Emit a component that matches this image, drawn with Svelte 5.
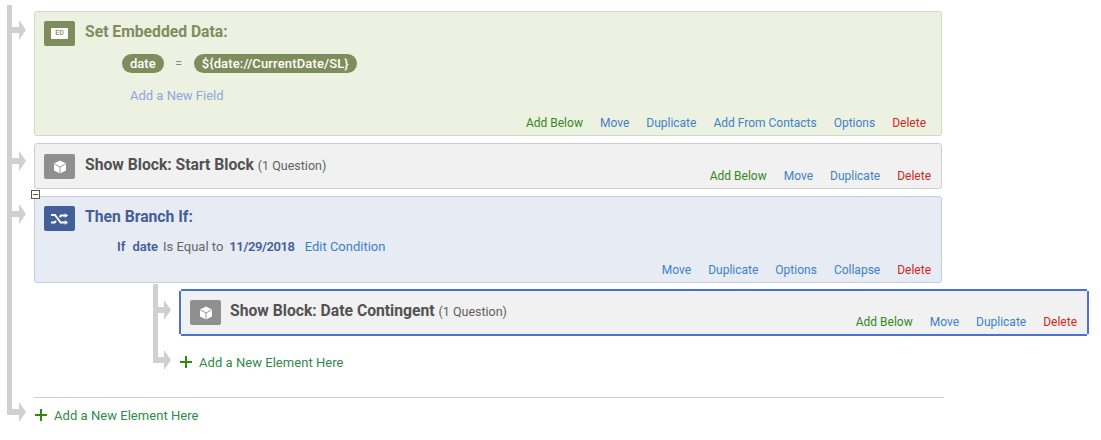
<script>
	const cube = 'M7 0.4 13 3.6V10.4L7 13.6 1 10.4V3.6Z';
</script>

{#snippet cubeIcon()}
	<span class="icon gray">
		<svg width="14" height="14" viewBox="0 0 14 14">
			<path d={cube} fill="#fff" />
			<path d="M1.4 3.9 7 7l5.6-3.1M7 7v6.5" fill="none" stroke="#8f8f8f" stroke-width="0.9" />
		</svg>
	</span>
{/snippet}

{#snippet addRow()}
	<div class="add-row">
		<svg width="12" height="12" viewBox="0 0 12 12"><path d="M5 0h2v5h5v2H7v5H5V7H0V5h5z" fill="#2f8a12" /></svg>
		<span class="add-text">Add a New Element Here</span>
	</div>
{/snippet}

<div class="flow">
	<div class="spine"></div>

	<div class="row">
		<div class="arrow top-a"></div>
		<section class="card green">
			<header class="head">
				<span class="icon olive"><span class="ed">ED</span></span>
				<h3 class="title olive-text">Set Embedded Data:</h3>
			</header>
			<div class="field">
				<span class="pill small">date</span>
				<span class="eq">=</span>
				<span class="pill wide">$&#123;date://CurrentDate/SL&#125;</span>
			</div>
			<div class="new-field">Add a New Field</div>
			<nav class="actions inset">
				<span class="g">Add Below</span>
				<span>Move</span>
				<span>Duplicate</span>
				<span>Add From Contacts</span>
				<span>Options</span>
				<span class="r">Delete</span>
			</nav>
		</section>
	</div>

	<div class="row">
		<div class="arrow mid-a"></div>
		<section class="card gray-card short">
			<header class="head">
				{@render cubeIcon()}
				<h3 class="title">Show Block: Start Block <small>(1 Question)</small></h3>
			</header>
			<nav class="actions">
				<span class="g">Add Below</span>
				<span>Move</span>
				<span>Duplicate</span>
				<span class="r">Delete</span>
			</nav>
		</section>
	</div>

	<div class="row">
		<div class="arrow mid-a"></div>
		<div class="collapse"></div>
		<section class="card blue">
			<header class="head">
				<span class="icon navy">
					<svg width="18" height="12" viewBox="0 0 18 12" fill="none" stroke="#fff" stroke-width="1.9">
						<path d="M0 2h4l5.6 7.5h4.4M0 9.5h3.6l1.4-1.6M8.6 4 10 2.5h4" />
						<path d="M13.8 0.2 17.2 2.5 13.8 4.8zM13.8 7.2 17.2 9.5 13.8 11.8z" fill="#fff" stroke="none" />
					</svg>
				</span>
				<h3 class="title navy-text">Then Branch If:</h3>
			</header>
			<div class="cond">
				<b>If</b>
				<b class="name">date</b>
				<span class="op">Is Equal to</span>
				<b class="val">11/29/2018</b>
				<span class="edit">Edit Condition</span>
			</div>
			<nav class="actions">
				<span>Move</span>
				<span>Duplicate</span>
				<span>Options</span>
				<span>Collapse</span>
				<span class="r">Delete</span>
			</nav>
		</section>
	</div>

	<div class="nested">
		<div class="nested-spine"></div>
		<div class="row">
			<div class="arrow nest-a"></div>
			<section class="card gray-card selected">
				<i class="corner tl"></i><i class="corner tr"></i><i class="corner bl"></i><i class="corner br"></i>
				<header class="head">
					{@render cubeIcon()}
					<h3 class="title">Show Block: Date Contingent <small>(1 Question)</small></h3>
				</header>
				<nav class="actions">
					<span class="g">Add Below</span>
					<span>Move</span>
					<span>Duplicate</span>
					<span class="r">Delete</span>
				</nav>
			</section>
		</div>
		<div class="row add-wrap">
			<div class="arrow nest-add"></div>
			{@render addRow()}
		</div>
	</div>

	<div class="row foot">
		<div class="arrow foot-a"></div>
		{@render addRow()}
	</div>
</div>

<style>
	:global(body) {
		margin: 0;
		background: #fff;
		font-family: Roboto, "Liberation Sans", sans-serif;
	}

	.flow {
		position: relative;
		width: 1101px;
		height: 440px;
		box-sizing: border-box;
		padding: 11px 0 0 34px;
		overflow: hidden;
	}

	.spine {
		position: absolute;
		left: 7px;
		top: 5px;
		width: 5px;
		height: 410px;
		background: #d0d0d0;
	}

	.row {
		position: relative;
		width: 908px;
		margin-bottom: 7px;
	}

	.arrow {
		position: absolute;
		left: -22px;
		width: 7px;
		height: 6px;
		background: #d0d0d0;
	}

	.arrow::after {
		content: '';
		position: absolute;
		left: 7px;
		top: -7px;
		border-left: 7px solid #d0d0d0;
		border-top: 10px solid transparent;
		border-bottom: 10px solid transparent;
	}

	.top-a { top: 16px; }
	.mid-a { top: 15px; }
	.nest-a { top: 18px; }
	.nest-add { top: 5px; }
	.foot-a { top: 11px; }

	.card {
		position: relative;
		box-sizing: border-box;
		border: 1px solid;
		border-radius: 3px;
		padding: 9px 15px 0 9px;
	}

	.green {
		height: 125px;
		background: #edf1e2;
		border-color: #d3dabd;
	}

	.gray-card {
		background: #f1f1f1;
		border-color: #cfcfcf;
	}

	.short {
		height: 46px;
		padding-top: 10px;
	}

	.blue {
		height: 87px;
		background: #e7ebf4;
		border-color: #c5cede;
	}

	.head {
		display: flex;
		align-items: flex-start;
		gap: 10px;
	}

	.icon {
		flex: none;
		display: flex;
		align-items: center;
		justify-content: center;
		width: 31px;
		height: 25px;
		border-radius: 2px;
	}

	.olive { background: #7f8c5c; }
	.gray { background: #8f8f8f; }
	.navy { background: #435f97; }

	.ed {
		width: 17px;
		height: 11px;
		background: #fff;
		border-radius: 1px;
		color: #7f8c5c;
		font-size: 7px;
		font-weight: 500;
		line-height: 11px;
		text-align: center;
	}

	.title {
		margin: 1px 0 0;
		font-size: 15.7px;
		font-weight: 700;
		line-height: 20px;
		color: #525252;
		white-space: nowrap;
	}

	.title small {
		font-size: 12.5px;
		font-weight: 400;
		color: #5f5f5f;
	}

	.olive-text { color: #7f8c5c; }
	.navy-text { color: #435f97; }

	.field {
		display: flex;
		align-items: center;
		margin: 8px 0 0 78px;
	}

	.pill {
		box-sizing: border-box;
		height: 19px;
		border-radius: 10px;
		background: #7f8c5c;
		color: #fff;
		font-size: 13px;
		font-weight: 500;
		line-height: 19px;
		padding: 0 8px;
		white-space: nowrap;
	}

	.wide {
		letter-spacing: 0.14px;
	}

	.eq {
		width: 30px;
		text-align: center;
		font-size: 12px;
		color: #7f8c5c;
	}

	.new-field {
		margin: 14px 0 0 86px;
		font-size: 13px;
		line-height: 18px;
		color: #8fa5de;
	}

	.actions {
		position: absolute;
		right: 10px;
		bottom: 4px;
		display: flex;
		gap: 17px;
		font-size: 12px;
		line-height: 16px;
		color: #3d82c6;
		white-space: nowrap;
	}

	.inset {
		right: 15px;
	}

	.g { color: #33881a; }
	.r { color: #d02a20; }

	.collapse {
		position: absolute;
		z-index: 1;
		left: -3px;
		top: -6px;
		box-sizing: border-box;
		width: 9px;
		height: 9px;
		background: #fff;
		border: 1px solid #5b5b45;
	}

	.collapse::after {
		content: '';
		position: absolute;
		left: 1px;
		top: 3px;
		width: 5px;
		height: 1px;
		background: #5b5b45;
	}

	.cond {
		display: flex;
		align-items: baseline;
		margin: 7px 0 0 73px;
		font-size: 13px;
		line-height: 18px;
		color: #666;
		white-space: nowrap;
	}

	.cond b {
		font-weight: 600;
		color: #435f97;
	}

	.name { margin-left: 7px; }
	.op { margin-left: 5px; }

	.val {
		margin-left: 6px;
		letter-spacing: -0.4px;
	}

	.edit {
		margin-left: 10px;
		color: #3d82c6;
	}

	.nested {
		position: relative;
		margin: -1px 0 0 145px;
	}

	.nested-spine {
		position: absolute;
		left: -26px;
		top: -5px;
		width: 5px;
		height: 79px;
		background: #d0d0d0;
	}

	.nested .row {
		width: 910px;
	}

	.selected {
		height: 47px;
		border: 2px solid #4a72d4;
		border-radius: 0;
		padding: 9px 10px 0 9px;
	}

	.selected .head {
		gap: 9px;
	}

	.corner {
		position: absolute;
		width: 2px;
		height: 2px;
		background: #fff;
	}

	.tl { left: -2px; top: -2px; }
	.tr { right: -2px; top: -2px; }
	.bl { left: -2px; bottom: -2px; }
	.br { right: -2px; bottom: -2px; }

	.add-row {
		display: flex;
		align-items: center;
		gap: 7px;
		height: 20px;
		padding-left: 1px;
		font-size: 13px;
		letter-spacing: 0.04px;
		color: #2e8a4a;
		white-space: nowrap;
	}

	.add-wrap {
		margin: 16px 0 0;
	}

	.foot {
		margin-top: 25px;
		padding-top: 7px;
		height: 24px;
		border-top: 1px solid #d0d0d0;
		width: 910px;
	}
</style>
